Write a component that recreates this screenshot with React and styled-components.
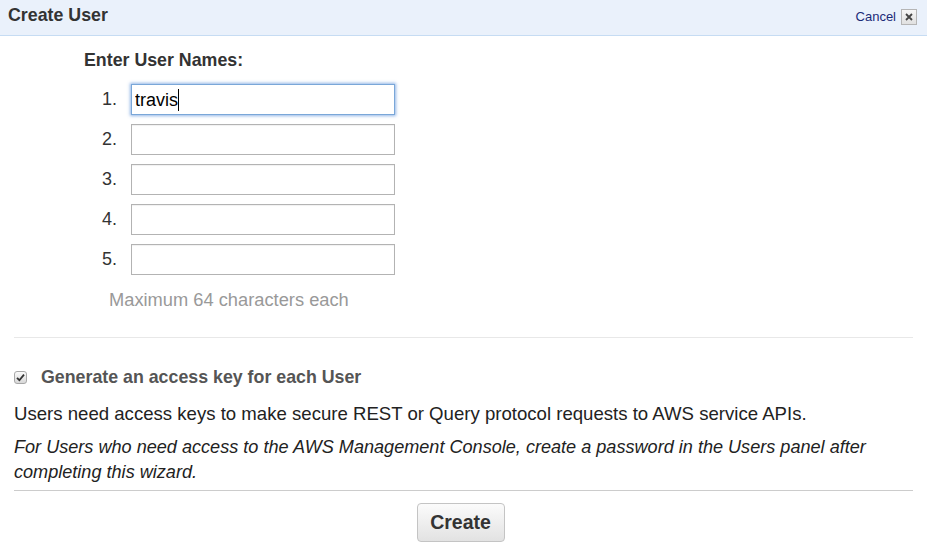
import React from "react";
import styled, { createGlobalStyle } from "styled-components";

const Global = createGlobalStyle`
  html, body {
    margin: 0;
    padding: 0;
    background: #fff;
  }
  body {
    font-family: "Liberation Sans", Arial, sans-serif;
    color: #222;
  }
`;

const Page = styled.div`
  width: 927px;
  height: 546px;
  overflow: hidden;
  background: #fff;
`;

const TitleBar = styled.div`
  height: 36px;
  box-sizing: border-box;
  display: flex;
  align-items: center;
  justify-content: space-between;
  padding: 0 10px 4px 8px;
  background: #eaf1fb;
  border-bottom: 1px solid #c6dcf3;
`;

const Title = styled.div`
  font-size: 17.8px;
  font-weight: bold;
  color: #333;
`;

const CancelWrap = styled.div`
  display: flex;
  align-items: center;
  gap: 5px;
  padding-top: 2px;
`;

const CancelLink = styled.a`
  font-size: 13px;
  color: #1b2b78;
  text-decoration: none;
`;

const CloseBox = styled.span`
  width: 14px;
  height: 14px;
  border: 1px solid #b5b5b5;
  background: linear-gradient(#f6f6f6, #e0e0e0);
  display: flex;
  align-items: center;
  justify-content: center;
`;

const Names = styled.div`
  padding: 13px 0 0 84px;
`;

const Heading = styled.div`
  font-size: 17.8px;
  font-weight: bold;
  line-height: 22px;
  color: #333;
  margin-bottom: 13px;
`;

const Rows = styled.div`
  display: flex;
  flex-direction: column;
  gap: 9px;
`;

const Row = styled.div`
  display: flex;
  align-items: center;
  gap: 14px;
`;

const Num = styled.span`
  width: 33px;
  text-align: right;
  font-size: 18px;
  color: #333;
`;

const Field = styled.div`
  position: relative;
  width: 264px;
  height: 31px;
`;

const NameInput = styled.input`
  width: 100%;
  height: 100%;
  box-sizing: border-box;
  border: 1px solid ${(p) => (p.$focus ? "#7aa7d8" : "#b3b3b3")};
  box-shadow: ${(p) => (p.$focus ? "0 0 3px 1px rgba(100, 150, 220, 0.7)" : "inset 0 1px 1px rgba(0,0,0,0.06)")};
  outline: none;
  padding: 2px 3px 0;
  font-family: "Liberation Sans", Arial, sans-serif;
  font-size: 18px;
  color: #000;
  caret-color: transparent;
`;

const Caret = styled.span`
  position: absolute;
  left: 47px;
  top: 5px;
  width: 1px;
  height: 22px;
  background: #000;
`;

const Hint = styled.div`
  font-size: 18.3px;
  line-height: 22px;
  color: #999;
  margin: 14px 0 0 25px;
`;

const Body = styled.div`
  padding: 0 14px;
`;

const Divider = styled.div`
  height: 1px;
  background: ${(p) => p.$color};
  margin-top: ${(p) => p.$top}px;
`;

const CheckRow = styled.label`
  display: flex;
  align-items: center;
  gap: 14px;
  margin-top: 28px;
  line-height: 22px;
`;

const Box = styled.span`
  width: 11px;
  height: 11px;
  border: 1px solid #a8a8a8;
  border-radius: 3px;
  background: linear-gradient(#fafafa, #d8d8d8);
  display: flex;
  align-items: center;
  justify-content: center;
`;

const CheckLabel = styled.span`
  font-size: 17.8px;
  font-weight: bold;
  color: #555;
`;

const Para = styled.p`
  margin: ${(p) => p.$top}px 0 0;
  font-size: ${(p) => (p.$italic ? "18.1px" : "18.6px")};
  line-height: 25px;
  color: #222;
  font-style: ${(p) => (p.$italic ? "italic" : "normal")};
`;

const Footer = styled.div`
  display: flex;
  justify-content: center;
  padding: 12px 6px 0 0;
`;

const CreateButton = styled.button`
  width: 88px;
  height: 39px;
  border: 1px solid #c4c4c4;
  border-radius: 4px;
  background: linear-gradient(#fbfbfb, #e2e2e2);
  font-family: "Liberation Sans", Arial, sans-serif;
  font-size: 19.5px;
  font-weight: bold;
  color: #333;
  padding: 0;
`;

const Check = () => (
  <svg width="9" height="9" viewBox="0 0 9 9">
    <path d="M1 4.8 L3.4 7.2 L8 1.6" fill="none" stroke="#333" strokeWidth="1.8" />
  </svg>
);

const Cross = () => (
  <svg width="10" height="10" viewBox="0 0 10 10">
    <path d="M2 2 L8 8 M8 2 L2 8" stroke="#444" strokeWidth="1.8" />
  </svg>
);

export default function App() {
  const rows = [1, 2, 3, 4, 5];
  return (
    <Page>
      <Global />
      <TitleBar>
        <Title>Create User</Title>
        <CancelWrap>
          <CancelLink href="#">Cancel</CancelLink>
          <CloseBox>
            <Cross />
          </CloseBox>
        </CancelWrap>
      </TitleBar>
      <Names>
        <Heading>Enter User Names:</Heading>
        <Rows>
          {rows.map((n) => (
            <Row key={n}>
              <Num>{n}.</Num>
              <Field>
                <NameInput $focus={n === 1} defaultValue={n === 1 ? "travis" : ""} />
                {n === 1 && <Caret />}
              </Field>
            </Row>
          ))}
        </Rows>
        <Hint>Maximum 64 characters each</Hint>
      </Names>
      <Body>
        <Divider $color="#e8e8e8" $top={26} />
        <CheckRow>
          <Box>
            <Check />
          </Box>
          <CheckLabel>Generate an access key for each User</CheckLabel>
        </CheckRow>
        <Para $top={13}>
          Users need access keys to make secure REST or Query protocol requests to AWS service APIs.
        </Para>
        <Para $top={9} $italic>
          For Users who need access to the AWS Management Console, create a password in the Users panel after
          completing this wizard.
        </Para>
        <Divider $color="#cccccc" $top={5} />
        <Footer>
          <CreateButton>Create</CreateButton>
        </Footer>
      </Body>
    </Page>
  );
}
